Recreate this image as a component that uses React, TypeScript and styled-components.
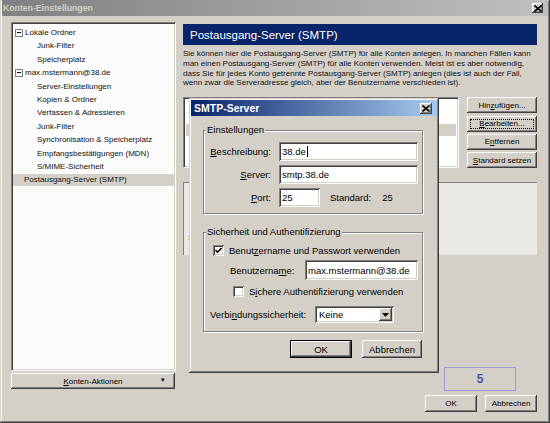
import React from 'react';
import styled, { createGlobalStyle } from 'styled-components';

const GlobalStyle = createGlobalStyle`
  html, body {
    margin: 0;
    padding: 0;
    background: #d4d0c8;
  }
  * {
    box-sizing: border-box;
  }
`;

const FONT = '"Liberation Sans", Arial, sans-serif';

const treeItems = [
  { label: 'Lokale Ordner', level: 0, expander: true },
  { label: 'Junk-Filter', level: 1 },
  { label: 'Speicherplatz', level: 1 },
  { label: 'max.mstermann@38.de', level: 0, expander: true },
  { label: 'Server-Einstellungen', level: 1 },
  { label: 'Kopien & Ordner', level: 1 },
  { label: 'Verfassen & Adressieren', level: 1 },
  { label: 'Junk-Filter', level: 1 },
  { label: 'Synchronisation & Speicherplatz', level: 1 },
  { label: 'Empfangsbestätigungen (MDN)', level: 1 },
  { label: 'S/MIME-Sicherheit', level: 1 },
  { label: 'Postausgang-Server (SMTP)', level: 0, selected: true },
];

const descLines = [
  'Sie können hier die Postausgang-Server (SMTP) für alle Konten anlegen. In manchen Fällen kann',
  'man einen Postausgang-Server (SMTP) für alle Konten verwenden. Meist ist es aber notwendig,',
  'dass Sie für jedes Konto getrennte Postausgang-Server (SMTP) anlegen (dies ist auch der Fall,',
  'wenn zwar die Serveradresse gleich, aber der Benutzername verschieden ist).',
];

const CloseIcon = () => (
  <svg width="8" height="7" viewBox="0 0 8 7">
    <path d="M0.5 0.5 L7.5 6.5 M7.5 0.5 L0.5 6.5" stroke="#000" strokeWidth="1.6" />
  </svg>
);

const App: React.FC = () => {
  return (
    <>
      <GlobalStyle />
      <Window>
        <TitleBar $active={false} $size={8.7}>
          <span>Konten-Einstellungen</span>
          <CloseButton $w={11} $h={10}>
            <CloseIcon />
          </CloseButton>
        </TitleBar>

        <Body>
          <LeftColumn>
            <Tree>
              {treeItems.map((item, i) => (
                <TreeRow key={i} $level={item.level} $expander={!!item.expander} $selected={!!item.selected}>
                  {item.expander && <Expander />}
                  {item.label}
                </TreeRow>
              ))}
            </Tree>
            <Button $w={164} $h={16}>
              <span><u>K</u>onten-Aktionen</span>
              <DropArrow>▾</DropArrow>
            </Button>
          </LeftColumn>

          <RightColumn>
            <PageHeader>Postausgang-Server (SMTP)</PageHeader>
            <Description>
              {descLines.map((line, i) => (
                <div key={i}>{line}</div>
              ))}
            </Description>

            <ServerRow>
              <ServerList>
                <ListItem />
                <ListItem />
                <ListItem $selected />
              </ServerList>
              <ButtonStack>
                <Button $w={70} $h={16}><span>Hin<u>z</u>ufügen...</span></Button>
                <Button $w={70} $h={16} $focus>
                  <span><u>B</u>earbeiten...</span>
                </Button>
                <Button $w={70} $h={16}><span>E<u>n</u>tfernen</span></Button>
                <Button $w={70} $h={16}><span><u>S</u>tandard setzen</span></Button>
              </ButtonStack>
            </ServerRow>

            <DetailPanel>
              <DetailLine>:</DetailLine>
            </DetailPanel>

            <CounterBox>5</CounterBox>

            <FooterButtons>
              <Button $w={52} $h={17}>OK</Button>
              <Button $w={52} $h={17}>Abbrechen</Button>
            </FooterButtons>
          </RightColumn>
        </Body>

        <Dialog>
          <TitleBar $active $size={10.5}>
            <span>SMTP-Server</span>
            <CloseButton $w={12} $h={11}>
              <CloseIcon />
            </CloseButton>
          </TitleBar>

          <Group $top={9}>
            <Legend>Einstellungen</Legend>
            <SettingsGrid>
              <FieldLabel><u>B</u>eschreibung:</FieldLabel>
              <TextField $w={139} $h={19}>
                38.de<Caret />
              </TextField>
              <FieldLabel><u>S</u>erver:</FieldLabel>
              <TextField $w={139} $h={19}>smtp.38.de</TextField>
              <FieldLabel><u>P</u>ort:</FieldLabel>
              <PortLine>
                <TextField $w={41} $h={19}>25</TextField>
                <StandardLabel>Standard:</StandardLabel>
                <StandardValue>25</StandardValue>
              </PortLine>
            </SettingsGrid>
          </Group>

          <Group $top={13}>
            <Legend>Sicherheit und Authentifizierung</Legend>
            <SecurityBody>
              <CheckLine $indent={9}>
                <CheckBox>
                  <svg width="7" height="7" viewBox="0 0 7 7">
                    <path d="M0.5 3 L2.5 5.2 L6.5 1" stroke="#000" strokeWidth="1.6" fill="none" />
                  </svg>
                </CheckBox>
                <span>Benut<u>z</u>ername und Passwort verwenden</span>
              </CheckLine>
              <FieldLine $indent={26} $top={4}>
                <InlineLabel $w={75}>Benutzerna<u>m</u>e:</InlineLabel>
                <TextField $w={113} $h={20}>max.mstermann@38.de</TextField>
              </FieldLine>
              <CheckLine $indent={29} $top={5}>
                <CheckBox />
                <span>S<u>i</u>chere Authentifizierung verwenden</span>
              </CheckLine>
              <FieldLine $indent={6} $top={9}>
                <InlineLabel $w={105}>Verbi<u>n</u>dungssicherheit:</InlineLabel>
                <Select>
                  <span>Keine</span>
                  <SelectButton>
                    <svg width="7" height="4" viewBox="0 0 7 4">
                      <path d="M0 0 H7 L3.5 4 Z" fill="#000" />
                    </svg>
                  </SelectButton>
                </Select>
              </FieldLine>
            </SecurityBody>
          </Group>

          <DialogButtons>
            <Button $w={62} $h={18} $size={9.5} $default>OK</Button>
            <Button $w={60} $h={18} $size={9.5}>Abbrechen</Button>
          </DialogButtons>
        </Dialog>
      </Window>
    </>
  );
};

export default App;

const Window = styled.div`
  position: relative;
  width: 550px;
  height: 423px;
  padding: 0 2px;
  background: #d4d0c8;
  box-shadow: inset -1px -1px #404040, inset 1px 1px #d4d0c8, inset -2px -2px #808080, inset 2px 2px #fff;
  font-family: ${FONT};
  font-size: 8px;
  color: #000;
  overflow: hidden;
`;

const TitleBar = styled.div<{ $active: boolean; $size: number }>`
  display: flex;
  align-items: center;
  justify-content: space-between;
  height: 16px;
  padding: 0 5px 0 1px;
  background: ${(p) =>
    p.$active
      ? 'linear-gradient(to right, #0a246a, #a6caf0)'
      : 'linear-gradient(to right, #808080, #c0c0c0)'};
  color: ${(p) => (p.$active ? '#fff' : '#d4d0c8')};
  font-family: ${FONT};
  font-size: ${(p) => p.$size}px;
  font-weight: bold;
  white-space: nowrap;

  & > span {
    padding-left: ${(p) => (p.$active ? 2 : 0)}px;
  }
`;

const CloseButton = styled.div<{ $w: number; $h: number }>`
  display: flex;
  align-items: center;
  justify-content: center;
  width: ${(p) => p.$w}px;
  height: ${(p) => p.$h}px;
  background: #d4d0c8;
  box-shadow: inset -1px -1px #404040, inset 1px 1px #fff, inset -2px -2px #808080;
`;

const Body = styled.div`
  display: flex;
  gap: 7px;
  padding: 6px 0 0 9px;
`;

const LeftColumn = styled.div`
  display: flex;
  flex-direction: column;
  gap: 2px;
  width: 165px;
`;

const Tree = styled.div`
  height: 349px;
  padding-top: 3.5px;
  background: #fbfcfb;
  border: 1px solid;
  border-color: #808080 #fff #fff #808080;
  box-shadow: inset 1px 1px #404040, inset -1px -1px #d4d0c8;
  display: flex;
  flex-direction: column;
  gap: 1.4px;
`;

const TreeRow = styled.div<{ $level: number; $expander: boolean; $selected: boolean }>`
  display: flex;
  align-items: center;
  height: 12px;
  margin: 0 1px;
  padding-left: ${(p) => (p.$level === 1 ? 24 : p.$expander ? 2 : 11)}px;
  background: ${(p) => (p.$selected ? '#d4d0c8' : 'transparent')};
  white-space: nowrap;
  color: #111;
`;

const Expander = styled.span`
  position: relative;
  width: 8px;
  height: 8px;
  margin-right: 2px;
  border: 1px solid #808080;
  background: #fff;

  &::after {
    content: '';
    position: absolute;
    left: 1px;
    right: 1px;
    top: 2.5px;
    height: 1px;
    background: #000;
  }
`;

const Button = styled.div<{ $w: number; $h: number; $size?: number; $default?: boolean; $focus?: boolean }>`
  position: relative;
  display: flex;
  align-items: center;
  justify-content: center;
  flex: none;
  width: ${(p) => p.$w}px;
  height: ${(p) => p.$h}px;
  background: #d4d0c8;
  box-shadow: ${(p) =>
    p.$default
      ? 'inset 0 0 0 1px #000, inset -2px -2px #404040, inset 2px 2px #fff, inset -3px -3px #808080'
      : 'inset -1px -1px #404040, inset 1px 1px #fff, inset -2px -2px #808080'};
  font-family: ${FONT};
  font-size: ${(p) => p.$size ?? 8}px;
  color: #000;
  white-space: nowrap;

  &::after {
    content: '';
    display: ${(p) => (p.$focus ? 'block' : 'none')};
    position: absolute;
    inset: 3px;
    border: 1px dotted #000;
  }
`;

const DropArrow = styled.span`
  position: absolute;
  right: 10px;
  top: 3px;
  font-size: 7px;
`;

const RightColumn = styled.div`
  display: flex;
  flex-direction: column;
  width: 354px;
  margin-top: 2px;
`;

const PageHeader = styled.div`
  display: flex;
  align-items: center;
  height: 21px;
  padding-left: 7px;
  background: #0a246a;
  color: #fff;
  font-size: 11.5px;
  white-space: nowrap;
`;

const Description = styled.div`
  margin-top: 4px;
  font-size: 8px;
  line-height: 9.8px;
  white-space: nowrap;
  color: #111;
`;

const ServerRow = styled.div`
  display: flex;
  gap: 8px;
  margin-top: 9px;
  height: 71px;
`;

const ServerList = styled.div`
  width: 276px;
  padding: 2px 2px 0;
  background: #fff;
  border: 1px solid;
  border-color: #808080 #fff #fff #808080;
  box-shadow: inset 1px 1px #404040, inset -1px -1px #d4d0c8;
`;

const ListItem = styled.div<{ $selected?: boolean }>`
  height: 12px;
  padding-left: 2px;
  line-height: 12px;
  white-space: nowrap;
  background: ${(p) => (p.$selected ? '#d4d0c8' : 'transparent')};
`;

const ButtonStack = styled.div`
  display: flex;
  flex-direction: column;
  justify-content: space-between;
`;

const DetailPanel = styled.div`
  margin-top: 14px;
  height: 73px;
  padding: 50px 0 0 4px;
  background: #ebe9e5;
  border-top: 1px solid #808080;
  border-left: 1px solid #808080;
`;

const DetailLine = styled.div`
  line-height: 10px;
`;

const CounterBox = styled.div`
  display: flex;
  align-items: center;
  justify-content: center;
  align-self: flex-end;
  width: 72px;
  height: 24px;
  margin: 112px 21px 0 0;
  border: 1px solid #9a9ad4;
  color: #4758aa;
  font-size: 12px;
  font-weight: bold;
`;

const FooterButtons = styled.div`
  display: flex;
  justify-content: flex-end;
  gap: 8px;
  margin-top: 4px;
`;

const Dialog = styled.div`
  position: absolute;
  left: 189px;
  top: 98px;
  width: 250px;
  height: 275px;
  padding: 2px;
  background: #d4d0c8;
  box-shadow: inset -1px -1px #404040, inset 1px 1px #d4d0c8, inset -2px -2px #808080, inset 2px 2px #fff;
  font-size: 9.5px;
`;

const Group = styled.fieldset<{ $top: number }>`
  width: 220px;
  margin: ${(p) => p.$top}px 0 0 12px;
  padding: 0;
  border: 1px solid #808080;
  box-shadow: 1px 1px 0 #fff, inset 1px 1px 0 #fff;
  min-width: 0;
`;

const Legend = styled.legend`
  margin-left: 2px;
  padding: 0 1px;
  line-height: 10px;
  background: #d4d0c8;
  font-size: 9.5px;
  white-space: nowrap;
`;

const SettingsGrid = styled.div`
  display: grid;
  grid-template-columns: 62px 139px;
  column-gap: 8px;
  row-gap: 4px;
  align-items: center;
  padding: 7px 0 6px 5px;
`;

const FieldLabel = styled.div`
  text-align: right;
  white-space: nowrap;
`;

const TextField = styled.div<{ $w: number; $h: number }>`
  display: flex;
  align-items: center;
  flex: none;
  width: ${(p) => p.$w}px;
  height: ${(p) => p.$h}px;
  padding: 0 3px;
  background: #fff;
  box-shadow: inset 1px 1px #808080, inset -1px -1px #fff, inset 2px 2px #404040, inset -2px -2px #d4d0c8;
  white-space: nowrap;
  overflow: hidden;
`;

const Caret = styled.span`
  width: 1px;
  height: 11px;
  margin-left: 1px;
  background: #000;
`;

const PortLine = styled.div`
  display: flex;
  align-items: center;
`;

const StandardLabel = styled.span`
  margin-left: 10px;
`;

const StandardValue = styled.span`
  margin-left: 11px;
`;

const SecurityBody = styled.div`
  display: flex;
  flex-direction: column;
  padding: 7px 0 8px;
`;

const CheckLine = styled.div<{ $indent: number; $top?: number }>`
  display: flex;
  align-items: center;
  gap: 5px;
  height: 12px;
  margin-top: ${(p) => p.$top ?? 0}px;
  padding-left: ${(p) => p.$indent}px;
  white-space: nowrap;
`;

const CheckBox = styled.span`
  display: flex;
  align-items: center;
  justify-content: center;
  width: 11px;
  height: 11px;
  background: #fff;
  box-shadow: inset 1px 1px #808080, inset -1px -1px #fff, inset 2px 2px #404040, inset -2px -2px #d4d0c8;
`;

const FieldLine = styled.div<{ $indent: number; $top: number }>`
  display: flex;
  align-items: center;
  margin-top: ${(p) => p.$top}px;
  padding-left: ${(p) => p.$indent}px;
`;

const InlineLabel = styled.span<{ $w: number }>`
  width: ${(p) => p.$w}px;
  white-space: nowrap;
`;

const Select = styled.div`
  display: flex;
  align-items: center;
  justify-content: space-between;
  width: 79px;
  height: 17px;
  padding: 2px 2px 2px 4px;
  background: #fff;
  box-shadow: inset 1px 1px #808080, inset -1px -1px #fff, inset 2px 2px #404040, inset -2px -2px #d4d0c8;
`;

const SelectButton = styled.span`
  display: flex;
  align-items: center;
  justify-content: center;
  width: 13px;
  height: 13px;
  background: #d4d0c8;
  box-shadow: inset -1px -1px #404040, inset 1px 1px #fff, inset -2px -2px #808080;
`;

const DialogButtons = styled.div`
  display: flex;
  justify-content: flex-end;
  gap: 10px;
  margin: 8px 15px 0 0;
`;
